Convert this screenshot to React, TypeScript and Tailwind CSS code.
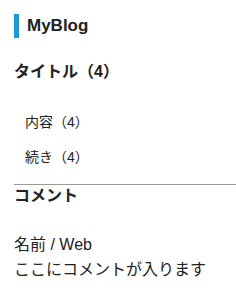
import React from 'react';

const items = ['内容（4）', '続き（4）'];

export default function App() {
  return (
    <div className="w-[236px] h-[294px] bg-white text-[#222] font-['Liberation_Sans','Noto_Sans_CJK_JP',sans-serif] flex flex-col">
      {/* blog title */}
      <div className="mt-[14px] ml-[14px] h-[24px] border-l-[5px] border-[#1a9ad6] pl-[8px] flex items-center text-[17px] font-bold leading-[24px]">
        MyBlog
      </div>

      {/* categories */}
      <h2 className="mt-[23px] ml-[14px] text-[16px] font-bold leading-[22px]">タイトル（4）</h2>
      <ul className="mt-[22px] ml-[14px] pl-[11px]">
        {items.map((item) => (
          <li key={item} className="h-[35px] flex items-center text-[14px]">
            {item}
          </li>
        ))}
      </ul>

      {/* comments */}
      <div className="mt-[9px] ml-[14px] border-t border-[#9a9a9a]">
        <h2 className="text-[16px] font-bold leading-[22px]">コメント</h2>
        <div className="mt-[25px] text-[16px] leading-[25px]">
          <p>名前 / Web</p>
          <p>ここにコメントが入ります</p>
        </div>
      </div>
    </div>
  );
}
